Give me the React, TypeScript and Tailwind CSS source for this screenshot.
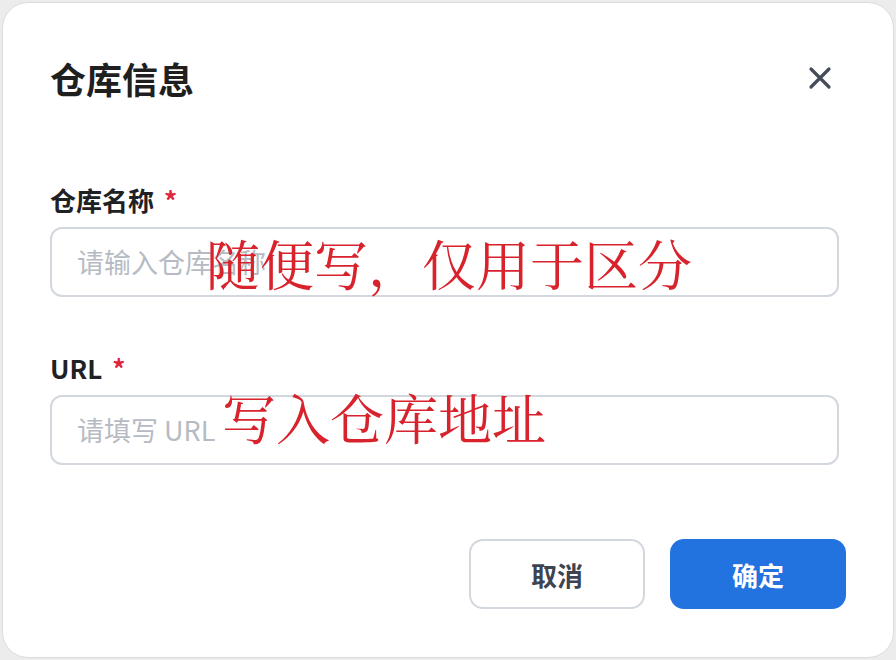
import React from 'react'

const cjk = { fontFamily: '"Noto Sans CJK SC", "Noto Sans", sans-serif' }
const note = { fontFamily: '"Noto Serif CJK SC", "Liberation Serif", "Noto Sans CJK SC", serif' }

const Field = ({
    label,
    placeholder,
    mark,
    markTop,
    markLeft,
}: {
    label: string
    placeholder: string
    mark: string
    markTop: string
    markLeft: string
}) => {
    return (
        <div className="flex flex-col">
            <div className="h-[36px] flex items-center text-[26px] font-bold text-[#1f2125] leading-none">
                {label}
                <span className="ml-[10px] text-[#e0263b] font-bold">*</span>
            </div>
            <div className="relative mt-[9px] mr-[7px]">
                <div className="h-[70px] rounded-[12px] border-2 border-[#d3d7de] bg-white flex items-center pl-[25px] text-[27px] text-[#b6bbc3]">
                    {placeholder}
                </div>
                <span
                    className={`absolute ${markTop} ${markLeft} text-[54px] leading-none text-[#d8222c] whitespace-nowrap`}
                    style={note}
                >
                    {mark}
                </span>
            </div>
        </div>
    )
}

export default function App() {
    return (
        <div className="w-[896px] h-[660px] bg-[#ececec] p-[2px]" style={cjk}>
            <div className="w-full h-full bg-white rounded-[26px] border border-[#dcdcdc] px-[47px] pt-[40px]">
                <div className="h-[70px] flex items-center justify-between">
                    <h1 className="text-[36px] font-bold text-[#1f1f1f] leading-none">仓库信息</h1>
                    <button className="w-[40px] h-[40px] mr-[6px] flex items-center justify-center text-[#454b58]">
                        <svg width="24" height="24" viewBox="0 0 24 24" fill="none" stroke="currentColor" strokeWidth="3.2" strokeLinecap="round">
                            <path d="M3 3 L21 21 M21 3 L3 21" />
                        </svg>
                    </button>
                </div>

                <div className="mt-[69px]">
                    <Field
                        label="仓库名称"
                        placeholder="请输入仓库名称"
                        mark="随便写，仅用于区分"
                        markTop="top-[9px]"
                        markLeft="left-[156px]"
                    />
                </div>
                <div className="mt-[53px]">
                    <Field
                        label="URL"
                        placeholder="请填写 URL"
                        mark="写入仓库地址"
                        markTop="top-[-5px]"
                        markLeft="left-[172px]"
                    />
                </div>

                <div className="mt-[74px] flex justify-end gap-[25px]">
                    <button className="w-[176px] h-[70px] rounded-[14px] border-2 border-[#d3d7de] bg-white text-[26px] font-bold text-[#3d4350]">
                        取消
                    </button>
                    <button className="w-[176px] h-[70px] rounded-[14px] bg-[#2272df] text-[26px] font-bold text-white">
                        确定
                    </button>
                </div>
            </div>
        </div>
    )
}
